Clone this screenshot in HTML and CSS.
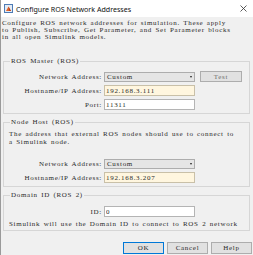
FILE: index.html
```html
<!DOCTYPE html>
<html>
<head>
<meta charset="utf-8">
<link rel="stylesheet" href="styles.css">
</head>
<body>
<div class="window">
  <div class="titlebar">
    <svg class="appicon" width="9" height="9" viewBox="0 0 9 9">
      <rect x="0.5" y="0.5" width="8" height="8" fill="#e3ebf4" stroke="#4d7bb5"/>
      <path d="M2 7 L4.5 2.5 L7 7 Z" fill="#e0622a"/>
      <path d="M4.5 2.5 L7 7 L5.3 7 Z" fill="#b23a16"/>
    </svg>
    <span class="title">Configure ROS Network Addresses</span>
    <svg class="close" width="7" height="7" viewBox="0 0 7 7">
      <path d="M0.5 0.5 L6.5 6.5 M6.5 0.5 L0.5 6.5" stroke="#333" stroke-width="0.8"/>
    </svg>
  </div>

  <p class="intro">Configure ROS network addresses for simulation. These apply<br>to Publish, Subscribe, Get Parameter, and Set Parameter blocks<br>in all open Simulink models.</p>

  <fieldset class="group master">
    <legend>ROS Master (ROS)</legend>
    <div class="row first">
      <span class="lbl">Network Address:</span>
      <div class="combo"><span>Custom</span><span class="caret"></span></div>
      <button class="btn test">Test</button>
    </div>
    <div class="row">
      <span class="lbl">Hostname/IP Address:</span>
      <input class="field edited" type="text" value="192.168.3.111">
    </div>
    <div class="row">
      <span class="lbl">Port:</span>
      <input class="field" type="text" value="11311">
    </div>
  </fieldset>

  <fieldset class="group node">
    <legend>Node Host (ROS)</legend>
    <p class="note">The address that external ROS nodes should use to connect to<br>a Simulink node.</p>
    <div class="row first spaced">
      <span class="lbl">Network Address:</span>
      <div class="combo"><span>Custom</span><span class="caret"></span></div>
    </div>
    <div class="row">
      <span class="lbl">Hostname/IP Address:</span>
      <input class="field edited" type="text" value="192.168.3.207">
    </div>
  </fieldset>

  <fieldset class="group domain">
    <legend>Domain ID (ROS 2)</legend>
    <div class="row">
      <span class="lbl">ID:</span>
      <input class="field" type="text" value="0">
    </div>
    <p class="note after">Simulink will use the Domain ID to connect to ROS 2 network</p>
  </fieldset>

  <div class="actions">
    <button class="btn default">OK</button>
    <button class="btn">Cancel</button>
    <button class="btn">Help</button>
  </div>
</div>
</body>
</html>
```

FILE: styles.css
```css
html, body{
margin:0;
padding:0;
}
body{
background:#f0f0f0;
width:253px;
height:255px;
overflow:hidden;
font-family:"Liberation Serif", "DejaVu Serif", serif;
font-size:7px;
letter-spacing:0.7px;
word-spacing:1px;
color:#2a2a2a;
}
.window{
border-left:1px solid #9a9a9a;
height:255px;
box-sizing:border-box;
}
.titlebar{
height:17px;
background:#ffffff;
display:flex;
align-items:center;
}
.appicon{
margin-left:3px;
}
.title{
margin-left:3px;
font-family:"Noto Sans", "Liberation Sans", sans-serif;
font-size:7.1px;
letter-spacing:0;
word-spacing:0;
color:#111;
flex:1;
}
.close{
margin-right:6px;
}
.intro{
margin:3px 0 0 0;
padding-left:1px;
line-height:7px;
white-space:nowrap;
}
.group{
margin:0 3px 0 2px;
padding:0 0 3px 0;
border:1px solid #d6d6d6;
min-width:0;
}
.group legend{
margin-left:6px;
padding:0 1px;
line-height:7px;
}
.master{
margin-top:17px;
padding-top:6px;
}
.node{
margin-top:5px;
padding-top:4px;
}
.domain{
margin-top:5px;
padding-top:4px;
padding-bottom:2px;
}
.row{
display:flex;
align-items:center;
height:11px;
margin-top:3px;
}
.row.first{
margin-top:0;
margin-bottom:1px;
}
.row.spaced{
margin-top:12px;
}
.lbl{
width:98px;
text-align:right;
white-space:nowrap;
}
.combo, .field{
margin-left:2px;
width:91px;
height:11px;
box-sizing:border-box;
}
.combo{
height:10px;
background:#e5e5e5;
border:1px solid #adadad;
display:flex;
align-items:center;
justify-content:space-between;
padding:0 2px;
}
.caret{
width:0;
height:0;
border-left:1.5px solid transparent;
border-right:1.5px solid transparent;
border-top:2px solid #222;
}
.field{
border:1px solid #b4b4b4;
background:#ffffff;
font-family:inherit;
font-size:7px;
letter-spacing:0.7px;
padding:0 1px;
color:#2a2a2a;
outline:none;
}
.field.edited{
background:#fff6df;
border-color:#c9c0a8;
}
.note{
margin:0;
padding-left:5px;
line-height:8px;
white-space:nowrap;
}
.note.after{
margin-top:3px;
}
.btn{
font-family:inherit;
font-size:7px;
letter-spacing:0.7px;
background:#e1e1e1;
border:1px solid #adadad;
height:12px;
width:41px;
padding:0;
color:#2a2a2a;
}
.btn.test{
margin-left:5px;
width:42px;
height:11px;
color:#6f6f6f;
}
.btn.default{
border-color:#0078d7;
}
.actions{
display:flex;
justify-content:flex-end;
gap:3px;
margin-top:11px;
padding-right:1px;
}
```
